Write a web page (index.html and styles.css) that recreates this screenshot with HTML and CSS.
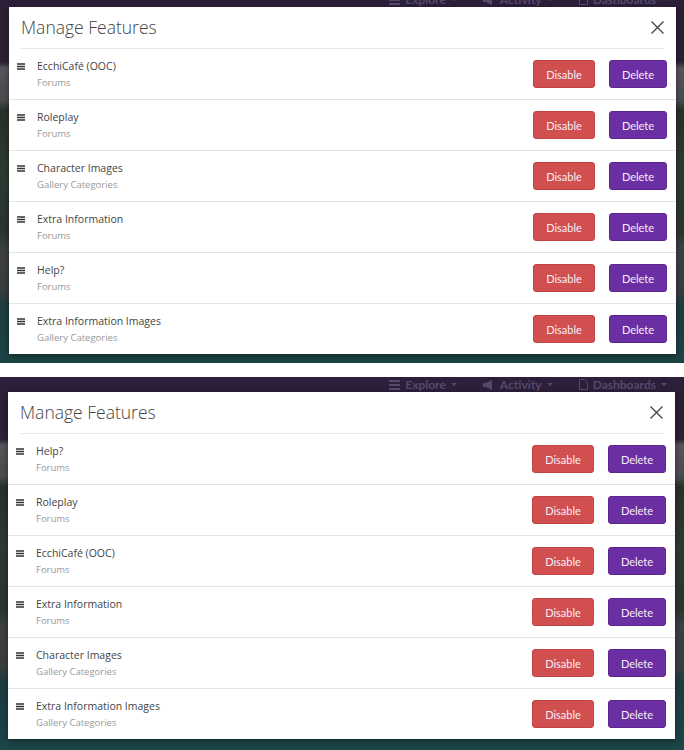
FILE: index.html
```html
<!DOCTYPE html>
<html lang="en">
<head>
  <meta charset="UTF-8" />
  <title>Manage Features</title>
  <link rel="stylesheet" href="styles.css">
</head>
<body>

  <div class="shot shot-first">
    <nav class="topnav">
      <span class="nav-item"><svg width="11" height="10" viewBox="0 0 11 10"><path d="M0 0h11v2H0zM0 4h11v2H0zM0 8h11v2H0z" fill="currentColor"/></svg>Explore <i class="caret"></i></span>
      <span class="nav-item"><svg width="12" height="10" viewBox="0 0 12 10"><path d="M0 3h3l6-3v10L3 7H0z" fill="currentColor"/></svg>Activity <i class="caret"></i></span>
      <span class="nav-item"><svg width="9" height="11" viewBox="0 0 9 11"><path d="M0.5 0.5h5l3 3v7h-8z" fill="none" stroke="currentColor"/></svg>Dashboards <i class="caret"></i></span>
    </nav>

    <div class="modal">
      <div class="modal-header">
        <h2>Manage Features</h2>
        <button class="close" aria-label="Close"><svg width="13" height="13" viewBox="0 0 13 13"><path d="M0.5 0.5l12 12M12.5 0.5l-12 12" stroke="#444" stroke-width="1.3"/></svg></button>
      </div>
      <ul class="feature-list">
        <li class="feature">
          <svg class="handle" width="8" height="7" viewBox="0 0 8 7"><path d="M0 0.3h8v1.4H0zM0 2.8h8v1.4H0zM0 5.3h8v1.4H0z" fill="#333"/></svg>
          <div class="feature-info"><div class="feature-name">EcchiCafé (OOC)</div><div class="feature-type">Forums</div></div>
          <button class="btn btn-disable">Disable</button>
          <button class="btn btn-delete">Delete</button>
        </li>
        <li class="feature">
          <svg class="handle" width="8" height="7" viewBox="0 0 8 7"><path d="M0 0.3h8v1.4H0zM0 2.8h8v1.4H0zM0 5.3h8v1.4H0z" fill="#333"/></svg>
          <div class="feature-info"><div class="feature-name">Roleplay</div><div class="feature-type">Forums</div></div>
          <button class="btn btn-disable">Disable</button>
          <button class="btn btn-delete">Delete</button>
        </li>
        <li class="feature">
          <svg class="handle" width="8" height="7" viewBox="0 0 8 7"><path d="M0 0.3h8v1.4H0zM0 2.8h8v1.4H0zM0 5.3h8v1.4H0z" fill="#333"/></svg>
          <div class="feature-info"><div class="feature-name">Character Images</div><div class="feature-type">Gallery Categories</div></div>
          <button class="btn btn-disable">Disable</button>
          <button class="btn btn-delete">Delete</button>
        </li>
        <li class="feature">
          <svg class="handle" width="8" height="7" viewBox="0 0 8 7"><path d="M0 0.3h8v1.4H0zM0 2.8h8v1.4H0zM0 5.3h8v1.4H0z" fill="#333"/></svg>
          <div class="feature-info"><div class="feature-name">Extra Information</div><div class="feature-type">Forums</div></div>
          <button class="btn btn-disable">Disable</button>
          <button class="btn btn-delete">Delete</button>
        </li>
        <li class="feature">
          <svg class="handle" width="8" height="7" viewBox="0 0 8 7"><path d="M0 0.3h8v1.4H0zM0 2.8h8v1.4H0zM0 5.3h8v1.4H0z" fill="#333"/></svg>
          <div class="feature-info"><div class="feature-name">Help?</div><div class="feature-type">Forums</div></div>
          <button class="btn btn-disable">Disable</button>
          <button class="btn btn-delete">Delete</button>
        </li>
        <li class="feature">
          <svg class="handle" width="8" height="7" viewBox="0 0 8 7"><path d="M0 0.3h8v1.4H0zM0 2.8h8v1.4H0zM0 5.3h8v1.4H0z" fill="#333"/></svg>
          <div class="feature-info"><div class="feature-name">Extra Information Images</div><div class="feature-type">Gallery Categories</div></div>
          <button class="btn btn-disable">Disable</button>
          <button class="btn btn-delete">Delete</button>
        </li>
      </ul>
    </div>
  </div>

  <div class="shot shot-second">
    <nav class="topnav">
      <span class="nav-item"><svg width="11" height="10" viewBox="0 0 11 10"><path d="M0 0h11v2H0zM0 4h11v2H0zM0 8h11v2H0z" fill="currentColor"/></svg>Explore <i class="caret"></i></span>
      <span class="nav-item"><svg width="12" height="10" viewBox="0 0 12 10"><path d="M0 3h3l6-3v10L3 7H0z" fill="currentColor"/></svg>Activity <i class="caret"></i></span>
      <span class="nav-item"><svg width="9" height="11" viewBox="0 0 9 11"><path d="M0.5 0.5h5l3 3v7h-8z" fill="none" stroke="currentColor"/></svg>Dashboards <i class="caret"></i></span>
    </nav>

    <div class="modal">
      <div class="modal-header">
        <h2>Manage Features</h2>
        <button class="close" aria-label="Close"><svg width="13" height="13" viewBox="0 0 13 13"><path d="M0.5 0.5l12 12M12.5 0.5l-12 12" stroke="#444" stroke-width="1.3"/></svg></button>
      </div>
      <ul class="feature-list">
        <li class="feature">
          <svg class="handle" width="8" height="7" viewBox="0 0 8 7"><path d="M0 0.3h8v1.4H0zM0 2.8h8v1.4H0zM0 5.3h8v1.4H0z" fill="#333"/></svg>
          <div class="feature-info"><div class="feature-name">Help?</div><div class="feature-type">Forums</div></div>
          <button class="btn btn-disable">Disable</button>
          <button class="btn btn-delete">Delete</button>
        </li>
        <li class="feature">
          <svg class="handle" width="8" height="7" viewBox="0 0 8 7"><path d="M0 0.3h8v1.4H0zM0 2.8h8v1.4H0zM0 5.3h8v1.4H0z" fill="#333"/></svg>
          <div class="feature-info"><div class="feature-name">Roleplay</div><div class="feature-type">Forums</div></div>
          <button class="btn btn-disable">Disable</button>
          <button class="btn btn-delete">Delete</button>
        </li>
        <li class="feature">
          <svg class="handle" width="8" height="7" viewBox="0 0 8 7"><path d="M0 0.3h8v1.4H0zM0 2.8h8v1.4H0zM0 5.3h8v1.4H0z" fill="#333"/></svg>
          <div class="feature-info"><div class="feature-name">EcchiCafé (OOC)</div><div class="feature-type">Forums</div></div>
          <button class="btn btn-disable">Disable</button>
          <button class="btn btn-delete">Delete</button>
        </li>
        <li class="feature">
          <svg class="handle" width="8" height="7" viewBox="0 0 8 7"><path d="M0 0.3h8v1.4H0zM0 2.8h8v1.4H0zM0 5.3h8v1.4H0z" fill="#333"/></svg>
          <div class="feature-info"><div class="feature-name">Extra Information</div><div class="feature-type">Forums</div></div>
          <button class="btn btn-disable">Disable</button>
          <button class="btn btn-delete">Delete</button>
        </li>
        <li class="feature">
          <svg class="handle" width="8" height="7" viewBox="0 0 8 7"><path d="M0 0.3h8v1.4H0zM0 2.8h8v1.4H0zM0 5.3h8v1.4H0z" fill="#333"/></svg>
          <div class="feature-info"><div class="feature-name">Character Images</div><div class="feature-type">Gallery Categories</div></div>
          <button class="btn btn-disable">Disable</button>
          <button class="btn btn-delete">Delete</button>
        </li>
        <li class="feature">
          <svg class="handle" width="8" height="7" viewBox="0 0 8 7"><path d="M0 0.3h8v1.4H0zM0 2.8h8v1.4H0zM0 5.3h8v1.4H0z" fill="#333"/></svg>
          <div class="feature-info"><div class="feature-name">Extra Information Images</div><div class="feature-type">Gallery Categories</div></div>
          <button class="btn btn-disable">Disable</button>
          <button class="btn btn-delete">Delete</button>
        </li>
      </ul>
    </div>
  </div>

</body>
</html>
```

FILE: styles.css
```css
* {
  box-sizing: border-box;
  margin: 0;
  padding: 0;
}

body {
  background: #fff;
  font-family: 'Open Sans', sans-serif;
  width: 684px;
  height: 750px;
  overflow: hidden;
}

/* each screenshot: darkened page behind the modal */
.shot {
  overflow: hidden;
  background: linear-gradient(to bottom,
    #2a1f33 0px, #2b2034 62px,
    #55555a 68px, #4a4b4e 100px,
    #283029 110px, #2c3a31 170px, #2a3430 230px,
    #3d4042 250px, #3a3d3f 290px,
    #1d3c40 305px, #1b4346 360px, #1e4a4c 400px);
}

.shot-first {
  height: 363px;
}

.shot-first .topnav {
  margin-top: -8px;
}

.shot-first .modal {
  margin-left: 9px;
}

.shot-second {
  margin-top: 14px;
  height: 373px;
}

.shot-second .modal {
  margin-left: 8px;
}

.topnav {
  height: 15px;
  display: flex;
  justify-content: flex-end;
  align-items: center;
  gap: 26px;
  padding-right: 17px;
  background: #2c1f3a;
  color: #56486a;
  font-family: 'Lato', sans-serif;
  font-weight: bold;
  font-size: 12px;
}

.nav-item {
  display: flex;
  align-items: center;
  gap: 5px;
}

.caret {
  display: inline-block;
  border-left: 3px solid transparent;
  border-right: 3px solid transparent;
  border-top: 3px solid currentColor;
}

.modal {
  width: 667px;
  background: #fff;
  box-shadow: 0 2px 6px rgba(0, 0, 0, 0.4);
}

.modal-header {
  margin: 0 12px;
  padding: 7px 0 8px;
  display: flex;
  justify-content: space-between;
  align-items: center;
  border-bottom: 1px solid #e6e6e6;
}

.modal-header h2 {
  font-size: 17.5px;
  line-height: 26px;
  font-weight: 300;
  color: #444;
}

.close {
  background: none;
  border: none;
  width: 13px;
  height: 13px;
  display: flex;
  cursor: pointer;
}

.feature-list {
  list-style: none;
}

.feature {
  display: flex;
  align-items: center;
  padding: 9px 9px 9px 8px;
  border-bottom: 1px solid #e4e4e4;
}

.feature:last-child {
  border-bottom: none;
}

.handle {
  flex: none;
  align-self: flex-start;
  margin: 5px 12px 0 0;
}

.feature-info {
  flex: 1;
}

.feature-name {
  font-size: 10.5px;
  line-height: 16px;
  color: #444;
  margin-bottom: 2px;
}

.feature-type {
  font-size: 9.5px;
  line-height: 14px;
  color: #999;
}

.btn {
  height: 28px;
  border-radius: 3px;
  font-family: 'Lato', sans-serif;
  font-size: 11px;
  color: #f8eef6;
  cursor: pointer;
}

.btn-disable {
  width: 62px;
  margin-right: 14px;
  background: #d24f50;
  border: 1px solid #c04445;
}

.btn-delete {
  width: 58px;
  background: #6b2fa3;
  border: 1px solid #5c2690;
}
```
